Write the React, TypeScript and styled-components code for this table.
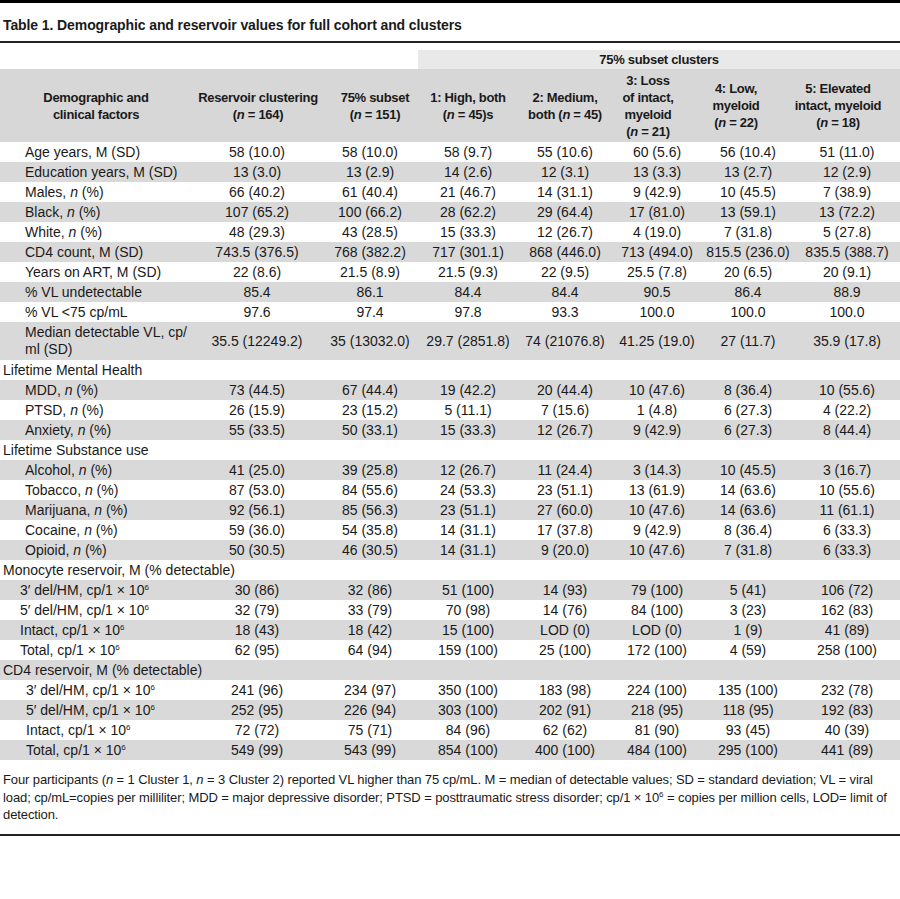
import styled, { createGlobalStyle } from 'styled-components';
import { ReactNode } from 'react';

const GlobalStyle = createGlobalStyle`
  body {
    margin: 0;
    background: #ffffff;
    color: #1a1a1a;
    font-family: 'Liberation Sans', Arial, sans-serif;
  }

  sup {
    font-size: 8px;
    line-height: 0;
    vertical-align: 5px;
  }
`;

type Row =
  | { kind: 'section'; label: string }
  | { kind: 'data'; label: ReactNode; indent: number; values: string[]; tall?: boolean };

const per = (
  <>
    <i>n</i> (%)
  </>
);
const mill = (
  <>
    cp/1 × 10<sup>6</sup>
  </>
);

const rows: Row[] = [
  { kind: 'data', label: 'Age years, M (SD)', indent: 25, values: ['58 (10.0)', '58 (10.0)', '58 (9.7)', '55 (10.6)', '60 (5.6)', '56 (10.4)', '51 (11.0)'] },
  { kind: 'data', label: 'Education years, M (SD)', indent: 25, values: ['13 (3.0)', '13 (2.9)', '14 (2.6)', '12 (3.1)', '13 (3.3)', '13 (2.7)', '12 (2.9)'] },
  { kind: 'data', label: <>Males, {per}</>, indent: 25, values: ['66 (40.2)', '61 (40.4)', '21 (46.7)', '14 (31.1)', '9 (42.9)', '10 (45.5)', '7 (38.9)'] },
  { kind: 'data', label: <>Black, {per}</>, indent: 25, values: ['107 (65.2)', '100 (66.2)', '28 (62.2)', '29 (64.4)', '17 (81.0)', '13 (59.1)', '13 (72.2)'] },
  { kind: 'data', label: <>White, {per}</>, indent: 25, values: ['48 (29.3)', '43 (28.5)', '15 (33.3)', '12 (26.7)', '4 (19.0)', '7 (31.8)', '5 (27.8)'] },
  { kind: 'data', label: 'CD4 count, M (SD)', indent: 25, values: ['743.5 (376.5)', '768 (382.2)', '717 (301.1)', '868 (446.0)', '713 (494.0)', '815.5 (236.0)', '835.5 (388.7)'] },
  { kind: 'data', label: 'Years on ART, M (SD)', indent: 25, values: ['22 (8.6)', '21.5 (8.9)', '21.5 (9.3)', '22 (9.5)', '25.5 (7.8)', '20 (6.5)', '20 (9.1)'] },
  { kind: 'data', label: '% VL undetectable', indent: 25, values: ['85.4', '86.1', '84.4', '84.4', '90.5', '86.4', '88.9'] },
  { kind: 'data', label: '% VL <75 cp/mL', indent: 25, values: ['97.6', '97.4', '97.8', '93.3', '100.0', '100.0', '100.0'] },
  {
    kind: 'data',
    label: (
      <>
        Median detectable VL, cp/
        <br />
        ml (SD)
      </>
    ),
    indent: 25,
    tall: true,
    values: ['35.5 (12249.2)', '35 (13032.0)', '29.7 (2851.8)', '74 (21076.8)', '41.25 (19.0)', '27 (11.7)', '35.9 (17.8)']
  },
  { kind: 'section', label: 'Lifetime Mental Health' },
  { kind: 'data', label: <>MDD, {per}</>, indent: 25, values: ['73 (44.5)', '67 (44.4)', '19 (42.2)', '20 (44.4)', '10 (47.6)', '8 (36.4)', '10 (55.6)'] },
  { kind: 'data', label: <>PTSD, {per}</>, indent: 25, values: ['26 (15.9)', '23 (15.2)', '5 (11.1)', '7 (15.6)', '1 (4.8)', '6 (27.3)', '4 (22.2)'] },
  { kind: 'data', label: <>Anxiety, {per}</>, indent: 25, values: ['55 (33.5)', '50 (33.1)', '15 (33.3)', '12 (26.7)', '9 (42.9)', '6 (27.3)', '8 (44.4)'] },
  { kind: 'section', label: 'Lifetime Substance use' },
  { kind: 'data', label: <>Alcohol, {per}</>, indent: 25, values: ['41 (25.0)', '39 (25.8)', '12 (26.7)', '11 (24.4)', '3 (14.3)', '10 (45.5)', '3 (16.7)'] },
  { kind: 'data', label: <>Tobacco, {per}</>, indent: 25, values: ['87 (53.0)', '84 (55.6)', '24 (53.3)', '23 (51.1)', '13 (61.9)', '14 (63.6)', '10 (55.6)'] },
  { kind: 'data', label: <>Marijuana, {per}</>, indent: 25, values: ['92 (56.1)', '85 (56.3)', '23 (51.1)', '27 (60.0)', '10 (47.6)', '14 (63.6)', '11 (61.1)'] },
  { kind: 'data', label: <>Cocaine, {per}</>, indent: 25, values: ['59 (36.0)', '54 (35.8)', '14 (31.1)', '17 (37.8)', '9 (42.9)', '8 (36.4)', '6 (33.3)'] },
  { kind: 'data', label: <>Opioid, {per}</>, indent: 25, values: ['50 (30.5)', '46 (30.5)', '14 (31.1)', '9 (20.0)', '10 (47.6)', '7 (31.8)', '6 (33.3)'] },
  { kind: 'section', label: 'Monocyte reservoir, M (% detectable)' },
  { kind: 'data', label: <>3′ del/HM, {mill}</>, indent: 20, values: ['30 (86)', '32 (86)', '51 (100)', '14 (93)', '79 (100)', '5 (41)', '106 (72)'] },
  { kind: 'data', label: <>5′ del/HM, {mill}</>, indent: 20, values: ['32 (79)', '33 (79)', '70 (98)', '14 (76)', '84 (100)', '3 (23)', '162 (83)'] },
  { kind: 'data', label: <>Intact, {mill}</>, indent: 20, values: ['18 (43)', '18 (42)', '15 (100)', 'LOD (0)', 'LOD (0)', '1 (9)', '41 (89)'] },
  { kind: 'data', label: <>Total, {mill}</>, indent: 20, values: ['62 (95)', '64 (94)', '159 (100)', '25 (100)', '172 (100)', '4 (59)', '258 (100)'] },
  { kind: 'section', label: 'CD4 reservoir, M (% detectable)' },
  { kind: 'data', label: <>3′ del/HM, {mill}</>, indent: 26, values: ['241 (96)', '234 (97)', '350 (100)', '183 (98)', '224 (100)', '135 (100)', '232 (78)'] },
  { kind: 'data', label: <>5′ del/HM, {mill}</>, indent: 26, values: ['252 (95)', '226 (94)', '303 (100)', '202 (91)', '218 (95)', '118 (95)', '192 (83)'] },
  { kind: 'data', label: <>Intact, {mill}</>, indent: 26, values: ['72 (72)', '75 (71)', '84 (96)', '62 (62)', '81 (90)', '93 (45)', '40 (39)'] },
  { kind: 'data', label: <>Total, {mill}</>, indent: 26, values: ['549 (99)', '543 (99)', '854 (100)', '400 (100)', '484 (100)', '295 (100)', '441 (89)'] }
];

const colWidths = [192, 130, 96, 100, 94, 90, 92, 106];

// shift: nudges a header's centre off its column centre, as in the source layout
const headers: { text: ReactNode; shift: number }[] = [
  { text: <>Demographic and<br />clinical factors</>, shift: 0 },
  { text: <>Reservoir clustering<br />(<i>n</i> = 164)</>, shift: 1 },
  { text: <>75% subset<br />(<i>n</i> = 151)</>, shift: 5 },
  { text: <>1: High, both<br />(<i>n</i> = 45)s</>, shift: 0 },
  { text: <>2: Medium,<br />both (<i>n</i> = 45)</>, shift: 0 },
  { text: <>3: Loss<br />of intact,<br />myeloid<br />(<i>n</i> = 21)</>, shift: -9 },
  { text: <>4: Low,<br />myeloid<br />(<i>n</i> = 22)</>, shift: -12 },
  { text: <>5: Elevated<br />intact, myeloid<br />(<i>n</i> = 18)</>, shift: -9 }
];

const App = () => (
  <>
    <GlobalStyle />
    <Page>
      <Title>Table 1. Demographic and reservoir values for full cohort and clusters</Title>
      <Table>
        <colgroup>
          {colWidths.map((w, i) => (
            <col key={i} style={{ width: w }} />
          ))}
        </colgroup>
        <thead>
          <tr>
            <SpanBlank colSpan={3} />
            <SpanHead colSpan={5}>75% subset clusters</SpanHead>
          </tr>
          <tr>
            {headers.map((h, i) => (
              <HeadCell key={i} $shift={h.shift}>
                {h.text}
              </HeadCell>
            ))}
          </tr>
        </thead>
        <tbody>
          {rows.map((row, i) => {
            const shaded = i % 2 === 1;
            if (row.kind === 'section') {
              return (
                <BodyRow key={i} $shaded={shaded}>
                  <SectionCell colSpan={8}>{row.label}</SectionCell>
                </BodyRow>
              );
            }
            return (
              <BodyRow key={i} $shaded={shaded} $tall={row.tall}>
                <LabelCell $indent={row.indent}>{row.label}</LabelCell>
                {row.values.map((v, j) => (
                  <ValueCell key={j}>{v}</ValueCell>
                ))}
              </BodyRow>
            );
          })}
        </tbody>
      </Table>
      <Footnote>
        Four participants (<i>n</i> = 1 Cluster 1, <i>n</i> = 3 Cluster 2) reported VL higher than 75 cp/mL. M =
        median of detectable values; SD = standard deviation; VL = viral load; cp/mL=copies per milliliter; MDD =
        major depressive disorder; PTSD = posttraumatic stress disorder; cp/1 × 10<sup>6</sup> = copies per million
        cells, LOD= limit of detection.
      </Footnote>
    </Page>
  </>
);

export default App;

const Page = styled.div`
  width: 900px;
  border-top: 3px solid #000;
`;

const Title = styled.div`
  padding: 13px 3px 7px;
  font-size: 14px;
  line-height: 18px;
  font-weight: 700;
  letter-spacing: -0.1px;
  border-bottom: 2px solid #222;
`;

const Table = styled.table`
  width: 900px;
  margin-top: 7px;
  border-collapse: collapse;
  table-layout: fixed;
  font-size: 14px;
`;

const SpanBlank = styled.th`
  height: 19px;
  padding: 0;
  background: #ffffff;
`;

const SpanHead = styled.th`
  height: 19px;
  padding: 0;
  background: #e9e9e9;
  font-size: 13px;
  font-weight: 700;
  letter-spacing: -0.3px;
  text-align: center;
  line-height: 19px;
`;

const HeadCell = styled.th<{ $shift: number }>`
  height: 73px;
  padding: 0;
  padding-left: ${({ $shift }) => ($shift > 0 ? $shift * 2 : 0)}px;
  padding-right: ${({ $shift }) => ($shift < 0 ? -$shift * 2 : 0)}px;
  background: #d7d7d7;
  font-size: 13px;
  font-weight: 700;
  letter-spacing: -0.3px;
  line-height: 17px;
  text-align: center;
  vertical-align: middle;
  white-space: nowrap;
`;

const BodyRow = styled.tr<{ $shaded: boolean; $tall?: boolean }>`
  height: ${({ $tall }) => ($tall ? '38px' : '20px')};
  background: ${({ $shaded }) => ($shaded ? '#d9d9d9' : '#ffffff')};
`;

const LabelCell = styled.td<{ $indent: number }>`
  padding: 0 0 0 ${({ $indent }) => $indent}px;
  line-height: 17px;
  white-space: nowrap;
`;

const SectionCell = styled.td`
  padding: 0 0 0 3px;
  line-height: 20px;
`;

const ValueCell = styled.td`
  padding: 0;
  text-align: center;
  line-height: 20px;
  white-space: nowrap;
`;

const Footnote = styled.div`
  padding: 11px 0 10px 3px;
  font-size: 13px;
  letter-spacing: -0.1px;
  line-height: 17.5px;
  border-bottom: 2px solid #222;
`;
